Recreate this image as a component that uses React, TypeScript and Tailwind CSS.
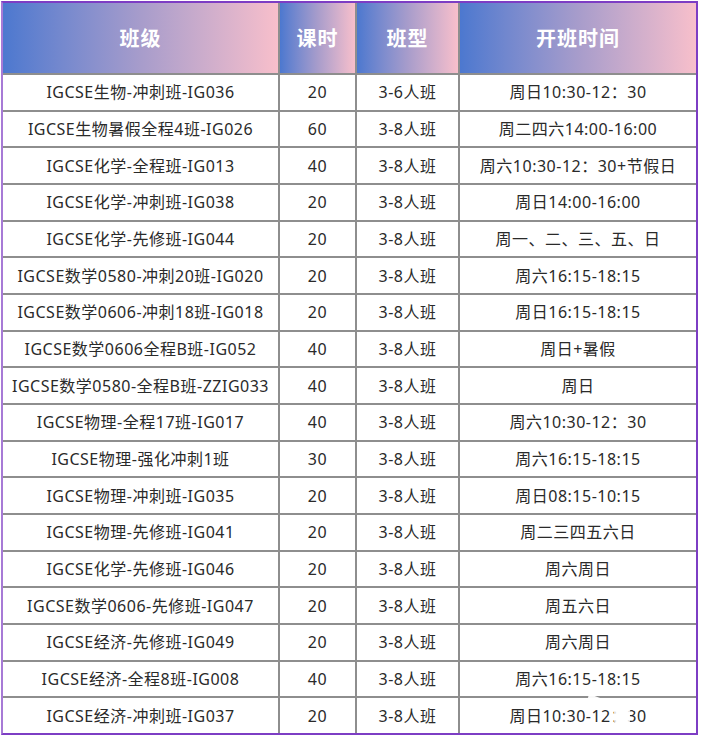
import React from "react";

const rows: [string, string, string, string][] = [
  ["IGCSE生物-冲刺班-IG036", "20", "3-6人班", "周日10:30-12：30"],
  ["IGCSE生物暑假全程4班-IG026", "60", "3-8人班", "周二四六14:00-16:00"],
  ["IGCSE化学-全程班-IG013", "40", "3-8人班", "周六10:30-12：30+节假日"],
  ["IGCSE化学-冲刺班-IG038", "20", "3-8人班", "周日14:00-16:00"],
  ["IGCSE化学-先修班-IG044", "20", "3-8人班", "周一、二、三、五、日"],
  ["IGCSE数学0580-冲刺20班-IG020", "20", "3-8人班", "周六16:15-18:15"],
  ["IGCSE数学0606-冲刺18班-IG018", "20", "3-8人班", "周日16:15-18:15"],
  ["IGCSE数学0606全程B班-IG052", "40", "3-8人班", "周日+暑假"],
  ["IGCSE数学0580-全程B班-ZZIG033", "40", "3-8人班", "周日"],
  ["IGCSE物理-全程17班-IG017", "40", "3-8人班", "周六10:30-12：30"],
  ["IGCSE物理-强化冲刺1班", "30", "3-8人班", "周六16:15-18:15"],
  ["IGCSE物理-冲刺班-IG035", "20", "3-8人班", "周日08:15-10:15"],
  ["IGCSE物理-先修班-IG041", "20", "3-8人班", "周二三四五六日"],
  ["IGCSE化学-先修班-IG046", "20", "3-8人班", "周六周日"],
  ["IGCSE数学0606-先修班-IG047", "20", "3-8人班", "周五六日"],
  ["IGCSE经济-先修班-IG049", "20", "3-8人班", "周六周日"],
  ["IGCSE经济-全程8班-IG008", "40", "3-8人班", "周六16:15-18:15"],
  ["IGCSE经济-冲刺班-IG037", "20", "3-8人班", "周日10:30-12：30"],
];

const headers = ["班级", "课时", "班型", "开班时间"];

function Watermark() {
  return (
    <svg
      className="absolute right-[10px] bottom-[0px] pointer-events-none"
      width="110"
      height="70"
      viewBox="0 0 110 70"
    >
      <rect x="12" y="34" width="18" height="4" fill="rgba(255,255,255,0.95)" transform="rotate(20 21 36)" />
      <rect x="38" y="38" width="16" height="22" rx="2" fill="rgba(255,255,255,0.85)" />
      <circle cx="59" cy="45" r="3" fill="rgba(255,255,255,0.9)" />
      <rect x="64" y="28" width="10" height="3" fill="rgba(255,255,255,0.9)" />
      <circle cx="75" cy="13" r="3" fill="rgba(255,255,255,0.8)" />
    </svg>
  );
}

export default function App() {
  return (
    <div className="w-[701px] h-[738px] bg-white pt-[1px] pl-[1px]">
      <div className="relative w-[697px] h-[734px] border-2 border-[#7d3dc4] border-l-[#a77ad6]">
        <div className="grid grid-cols-[275px_75px_101px_236px] grid-rows-[70px_repeat(18,1fr)] gap-[2px] bg-[#8e8e8e] h-full w-[693px]">
          {headers.map((h) => (
            <div
              key={h}
              className="flex items-center justify-center bg-gradient-to-r from-[#4c78cf] via-[#a79ccb] to-[#f8bfcb] text-white font-bold text-[20px] tracking-[1px] [font-family:'Noto_Sans_CJK_SC',sans-serif]"
            >
              {h}
            </div>
          ))}
          {rows.map((r, i) =>
            r.map((c, j) => (
              <div
                key={i + "-" + j}
                className="flex items-center justify-center bg-white text-[#2a2a2a] text-[16px] tracking-[0.5px] whitespace-nowrap [font-family:'Noto_Sans','Noto_Sans_CJK_SC',sans-serif]"
              >
                {c}
              </div>
            ))
          )}
        </div>
        <Watermark />
      </div>
    </div>
  );
}
